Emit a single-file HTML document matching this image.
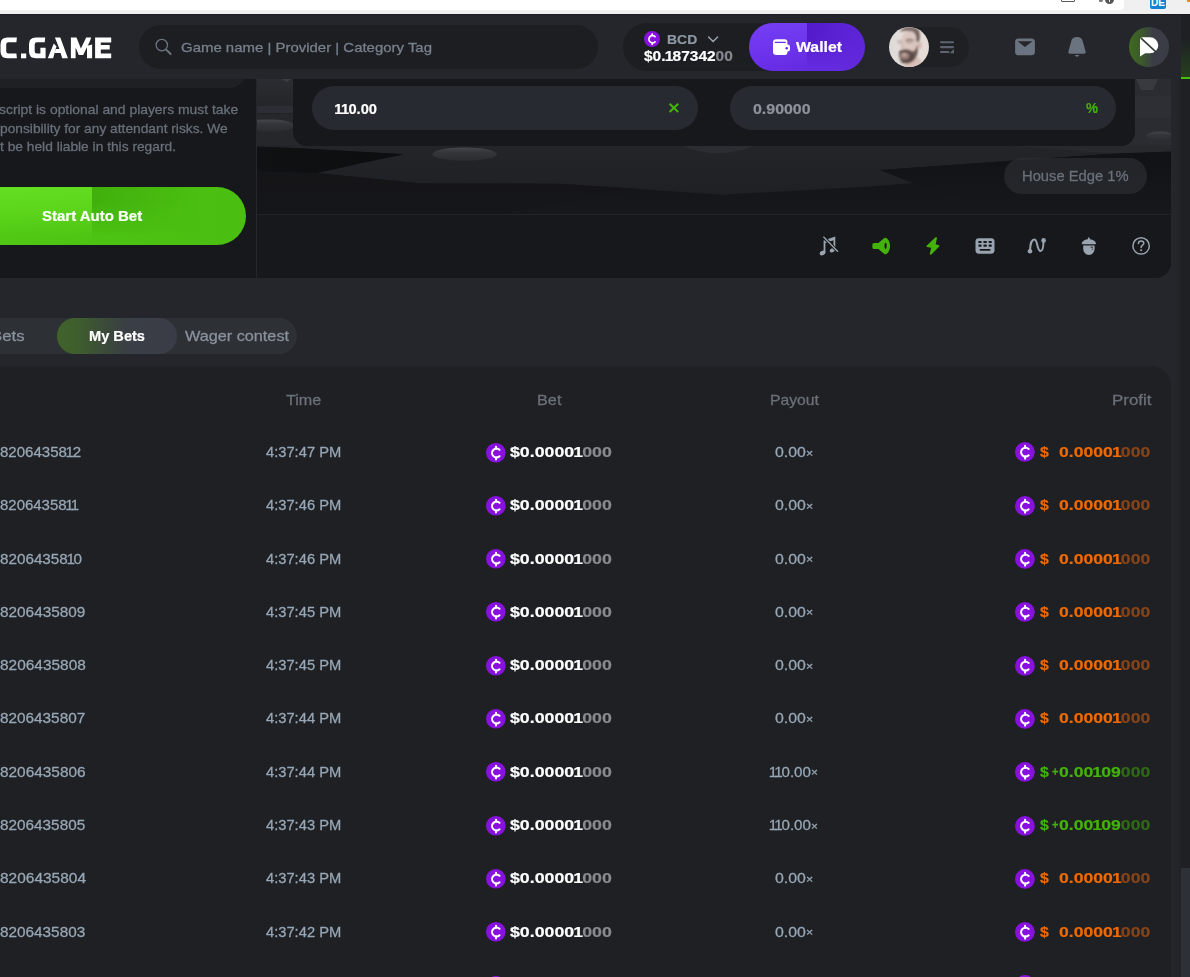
<!DOCTYPE html>
<html lang="en"><head><meta charset="utf-8"><title>BC.GAME</title>
<style>
*{margin:0;padding:0;box-sizing:border-box}
html,body{width:1190px;height:977px;overflow:hidden;background:#24262b}
body{position:relative;font-family:"Liberation Sans",sans-serif;font-size:15px;color:#98a7b5}
.a{position:absolute}
.t{-webkit-text-stroke:.28px;position:absolute;white-space:nowrap;line-height:20px;height:20px;transform-origin:0 50%;display:block}
svg{position:absolute;overflow:visible}
/* browser chrome strip */
#chrome{left:0;top:0;width:1190px;height:15px;background:#f0f0f0;border-bottom:1px solid #1b1c20}
#url{left:0;top:0;width:1124px;height:10px;background:#fff;border-radius:0 0 4px 0}
#urlrest{left:0;top:0;width:1100px;height:10px;background:#fff}
#de{left:1150px;top:0;width:16px;height:9px;background:#1283d4;border-radius:0 0 2px 2px;color:#fff;font-weight:700;font-size:10px;line-height:5px;text-align:center;overflow:hidden}
/* header */
#hdr{left:0;top:15px;width:1181px;height:64px;background:#24262b}
#search{left:139px;top:25px;width:459px;height:44px;border-radius:22px;background:#1c1e22}
#cur{left:623px;top:23px;width:200px;height:48px;border-radius:24px;background:#1c1e22}
#wallet{left:749px;top:23px;width:116px;height:48px;border-radius:24px;background:linear-gradient(90deg,#6a2fe9 0,#652be1 50%,#6129db 100%);overflow:hidden}
#wl1{left:0;top:0;width:58px;height:48px;background:linear-gradient(180deg,rgba(125,75,255,.55) 0,rgba(125,75,255,.3) 45%,rgba(125,75,255,0) 90%)}
#wl2{left:58px;top:0;width:58px;height:48px;background:linear-gradient(90deg,rgba(70,15,185,.6) 0,rgba(70,15,185,.25) 60%,rgba(70,15,185,.1) 100%);-webkit-mask-image:linear-gradient(180deg,#000 0,#000 30%,transparent 90%);mask-image:linear-gradient(180deg,#000 0,#000 30%,transparent 90%)}
#avpill{left:889px;top:27px;width:80px;height:40px;border-radius:20px;background:#1e2024}
#avatar{left:889px;top:27px;width:40px;height:40px;border-radius:50%;overflow:hidden;background:#d9cfcb}
#chat{left:1129px;top:27px;width:40px;height:40px;border-radius:50%;background:linear-gradient(90deg,#3f6b1f 0,#3c5a2a 30%,#3a3d45 60%,#3a3d47 100%)}
/* right strip */
#rstrip{left:1181px;top:15px;width:9px;height:962px;background:#1e2024}
#rgreen{left:1181px;top:38px;width:9px;height:39px;background:linear-gradient(180deg,rgba(67,179,9,0) 0,rgba(67,179,9,.22) 100%)}
#rline{left:1181px;top:77px;width:9px;height:2px;background:#43c10c}
#thumb{left:1181px;top:868px;width:9px;height:109px;background:#2d3036}
/* left panel */
#lpanel{left:0;top:79px;width:256px;height:199px;background:#17181b;overflow:hidden}
#lprev{left:-20px;top:60px;width:266px;height:28px;border-radius:0 0 16px 16px;background:#1e2024}
#startbtn{left:-40px;top:187px;width:286px;height:58px;border-radius:29px;background:linear-gradient(90deg,#50c914 0,#4cc212 50%,#4bbf11 100%);overflow:hidden}
#sb1{left:0;top:0;width:132px;height:58px;background:linear-gradient(180deg,rgba(120,245,45,.5) 0,rgba(120,245,45,.34) 40%,rgba(120,245,45,.04) 85%,rgba(120,245,45,0) 100%)}
#sb2{left:132px;top:0;width:110px;height:58px;background:linear-gradient(90deg,rgba(50,150,5,.42) 0,rgba(50,150,5,0) 100%);-webkit-mask-image:linear-gradient(180deg,#000 0,#000 25%,transparent 82%);mask-image:linear-gradient(180deg,#000 0,#000 25%,transparent 82%)}
/* game area */
#game{left:257px;top:79px;width:914px;height:199px;background:#17181b;border-radius:0 0 16px 0;overflow:hidden}
#scene{left:0;top:0;width:914px;height:135px;background:#1b1c1f;overflow:hidden}
#tbar{left:0;top:135px;width:914px;height:64px;background:#17181b;border-top:1px solid #212327}
#cpanel{left:36.4px;top:-10px;width:841.4px;height:76.6px;border-radius:0 0 14px 14px;background:#17181b}
.inp{top:7px;height:44px;border-radius:22px;background:#282a32}
#he{left:747px;top:79px;width:143px;height:36px;border-radius:18px;background:rgba(45,48,53,.62)}
/* tabs */
#tabs{left:-40px;top:318px;width:337px;height:36px;border-radius:18px;background:#2d3035}
#tabact{left:57px;top:318px;width:120px;height:36px;border-radius:18px;background:linear-gradient(90deg,#40632a 0,#3f5f2d 16%,#3b4b39 40%,#3a3e45 58%,#3a3d47 100%)}
/* table */
#table{left:-30px;top:366px;width:1201px;height:640px;border-radius:0 20px 0 0;background:#1e2024}
.t i{font-style:normal;margin:0 -.09em}
.t .x{font-weight:400;font-size:.78em;position:relative;top:-.04em}
.t.b{font-weight:700;-webkit-text-stroke:.2px}
.t.b i{margin:0 -.05em}
#rshadow{left:1174px;top:79px;width:7px;height:898px;background:linear-gradient(90deg,rgba(0,0,0,0),rgba(0,0,0,.1))}

</style></head>
<body>
<div class="a" id="chrome"></div><div class="a" id="url"></div>
<div class="a" style="left:1061px;top:-8px;width:14px;height:10px;border:1.4px solid #5a5a5a;border-radius:1px"></div>
<div class="a" style="left:1104.5px;top:-6px;width:9.6px;height:9.6px;border-radius:50%;background:#555"></div>
<div class="a" style="left:1108.6px;top:-3px;width:1.4px;height:5px;background:#eee"></div>
<div class="a" style="left:1099px;top:-1px;width:4px;height:3px;border-radius:0 0 2px 1px;background:#777"></div>
<div class="a" id="de">DE</div>
<div class="a" style="left:1187px;top:0;width:3px;height:2px;background:#f08a24"></div>
<div class="a" id="hdr"></div>
<svg class="a" style="left:0;top:30px" width="120" height="36" viewBox="0 30 120 36" role="img" aria-label="BC.GAME"><g fill="#fff"><path d="M16.9 37.5H7.4Q0.5 37.5 0.5 44.2V51.6Q0.5 58.3 7.4 58.3H16.9L16.4 53.6H8.6Q6.2 53.6 6.2 51.2V44.6Q6.2 42.2 8.6 42.2H16.4Z"/><rect x="21" y="53.5" width="5.2" height="4.8"/><path d="M45.2 37.5H35.8Q29 37.5 29 44.2V51.6Q29 58.3 35.8 58.3H45.6V47.8H40.4V53.6H37Q34.7 53.6 34.7 51.2V44.6Q34.7 42.2 37 42.2H44.7Z"/><path d="M54.9 37.6H60.3L67.9 58.3H62.2L60.6 53H54.6L55.6 49H59.4L58 45.2Z"/><path d="M47.8 58.3L53.8 43.6L56.6 46.6L55.6 49L54.6 53L53.1 58.3Z"/><path d="M70.9 37.6H76.5L80.9 48.4L86.2 37.6H91.2L90 41L83.2 55H78.8L75.6 47.4V58.3H70.9Z"/><path d="M87 45.8L92.1 44.4V58.3H87Z"/><path d="M95.1 37.6H111.2V42.5H100.8V45.1H109.7V49.6H100.8V53.5H111.2V58.3H95.1Z"/></g></svg>
<div class="a" id="search"></div>
<svg class="a" style="left:154px;top:37px" width="20" height="20" viewBox="0 0 20 20"><circle cx="7.8" cy="8.1" r="5.7" fill="none" stroke="#6e7682" stroke-width="1.3"/><path d="M12.2 12.6L16.6 17" stroke="#6e7682" stroke-width="1.9" stroke-linecap="round"/></svg>
<span class="t" style="left:181.00px;top:37.76px;font-size:13.3px;color:#77808c;transform:scaleX(1.1245);">Game name | Provider | Category Tag</span>
<div class="a" id="cur"></div>
<svg class="a" style="left:644.00px;top:31.00px" width="16" height="16" viewBox="0 0 20 20"><circle cx="10" cy="10" r="10" fill="#8911e0"/><path d="M13.8 7A4.5 4.5 0 1 0 13.8 13.5" fill="none" stroke="#fff" stroke-width="2.1" stroke-linecap="round"/><path d="M10.2 3.7V6M10.2 14.5V16.8" stroke="#fff" stroke-width="2" stroke-linecap="round"/></svg>
<span class="t b" style="left:666.80px;top:29.96px;font-size:13.6px;color:#8e98a5;transform:scaleX(1.0254);">BCD</span>
<svg class="a" style="left:707px;top:35px" width="12" height="9" viewBox="0 0 12 9"><path d="M1.6 2L6.1 6.6L10.6 2" fill="none" stroke="#98a2ae" stroke-width="1.5" stroke-linecap="round" stroke-linejoin="round"/></svg>
<span class="t b" style="left:644.00px;top:46.47px;font-size:14.5px;color:#fff;transform:scaleX(1.0663);">$0.<i>1</i>87342<span style="color:#85888e">00</span></span>
<div class="a" id="wallet"><div class="a" id="wl1"></div><div class="a" id="wl2"></div></div>
<svg class="a" style="left:772px;top:38px" width="20" height="18" viewBox="0 0 20 18"><path d="M1 4.6A3.3 3.3 0 0 1 4.3 1.3H12.6A2.8 2.8 0 0 1 15.4 4.1V6.6H15.8A2.2 2.2 0 0 1 18 8.8V11.6A2.2 2.2 0 0 1 15.8 13.6H15.4V14.2A2.8 2.8 0 0 1 12.6 17H4.3A3.3 3.3 0 0 1 1 13.7Z" fill="#fff"/><path d="M3.4 4.4H13.2" stroke="#6a30ea" stroke-width="1.3" stroke-linecap="round"/><circle cx="14.7" cy="10.3" r="1.25" fill="#652be1"/></svg>
<span class="t b" style="left:795.60px;top:37.38px;font-size:15px;color:#fff;transform:scaleX(1.0544);">Wallet</span>
<div class="a" id="avpill"></div>
<svg class="a" style="left:889px;top:27px" width="40" height="40" viewBox="0 0 40 40"><defs><clipPath id="avc"><circle cx="20" cy="20.1" r="20"/></clipPath><filter id="b1" x="-30%" y="-30%" width="160%" height="160%"><feGaussianBlur stdDeviation="1.3"/></filter><filter id="b2" x="-30%" y="-30%" width="160%" height="160%"><feGaussianBlur stdDeviation="0.8"/></filter><linearGradient id="avbg" x1="0" y1="0" x2="1" y2="0"><stop offset="0" stop-color="#dedad7"/><stop offset=".5" stop-color="#e6e1de"/><stop offset="1" stop-color="#e6dad6"/></linearGradient></defs><g clip-path="url(#avc)"><rect width="40" height="40" fill="url(#avbg)"/><g filter="url(#b1)"><ellipse cx="20.5" cy="17" rx="9.2" ry="13" fill="#dbc7c0"/><path d="M18 33L30 30L36 42H14Z" fill="#d9c0b8"/><ellipse cx="31" cy="18.5" rx="1.8" ry="3.4" fill="#d4b9b1"/><path d="M11 4.5C14 -1 26 -2 30 3.5C31.5 7 31 11 30 14.5L27.6 14C27.8 9 26 5.5 23 4.5C19 3.4 14 4 11 4.5Z" fill="#7d6c68"/><path d="M25 3C29 4 31.4 8 30 15L27.4 14.4C27.8 9 26.6 5.6 25 3Z" fill="#6f5f5b"/><path d="M10.2 24.6C13.5 22 19 22.4 23.4 24.4C26.4 23.6 27.6 20.5 28.2 17.5C29.6 22 29 29 25.4 33C22 36.8 15.6 37.6 12.4 35.4C10.4 32 9.6 27.6 10.2 24.6Z" fill="#6c5955"/><path d="M22 26C25 27 25.6 31 23 33.6C20.6 35.8 16 36.4 13.2 34.6C16 34.6 20 33.6 21.6 31Z" fill="#54423f"/><path d="M10.6 24.8C14 22.6 19 23 23.2 25" stroke="#57443f" stroke-width="1.6" fill="none"/><ellipse cx="15.6" cy="29" rx="4" ry="2.8" fill="#a48b85"/></g><g filter="url(#b2)"><ellipse cx="15.2" cy="27.4" rx="2.6" ry="1.1" fill="#cbaaa2"/><path d="M17 13.6C19 12.6 22.6 12.6 24.4 13.6" stroke="#6f5c58" stroke-width="1.2" fill="none"/><path d="M17.6 15.4H23.6" stroke="#9d8882" stroke-width="1"/><path d="M8 15C9.6 14 11.6 14 13 15" stroke="#b09c97" stroke-width="1.1" fill="none"/><path d="M9 16.6H12.6" stroke="#c0aca7" stroke-width=".9"/><path d="M14.4 16L13.4 22.4" stroke="#cdb6af" stroke-width="1.4"/></g></g></svg>
<svg class="a" style="left:939px;top:40px" width="16" height="14" viewBox="0 0 16 14"><path d="M2 2.2H14M2 7.1H14M2 12H9.5" stroke="#5d6470" stroke-width="2.1" stroke-linecap="round"/><path d="M10.6 13.2L15 8.9V13.2Z" fill="#5d6470"/></svg>
<svg class="a" style="left:1015px;top:38px" width="20" height="18" viewBox="0 0 20 18"><rect x="0.1" y="0.4" width="19.8" height="16.9" rx="3.6" fill="#6b7380"/><path d="M2.6 3.2H17.4L10 8.9Z" fill="#24262b"/></svg>
<svg class="a" style="left:0;top:0" width="1190" height="100" viewBox="0 0 1190 100"><path d="M1077 37C1073.6 37 1071.6 38.7 1071.2 41.5L1068.6 50.7C1068 52.6 1068.6 53.7 1070 53.7H1084C1085.4 53.7 1086 52.6 1085.4 50.7L1082.8 41.5C1082.4 38.7 1080.4 37 1077 37Z" fill="#6b7380"/><path d="M1074.3 54.9H1079.7L1077 57.1Z" fill="#6b7380"/></svg>
<div class="a" id="chat"></div>
<svg class="a" style="left:1129px;top:27px" width="40" height="40" viewBox="0 0 40 40"><path d="M11 29.6V13.4Q11 10.3 14 10.3H21A8.3 8 0 0 1 21 26.3H16.2Z" fill="#fff"/><path d="M12 11.2L27.4 25.4" stroke="#333b36" stroke-width="1.6"/></svg>
<div class="a" id="rshadow"></div><div class="a" id="rstrip"></div><div class="a" id="rgreen"></div><div class="a" id="rline"></div><div class="a" id="thumb"></div>
<div class="a" id="lpanel"><div class="a" id="lprev" style="top:-19px"></div></div>
<div class="a" style="left:256px;top:79px;width:1px;height:199px;background:#24262b"></div>
<span class="t" style="left:-0.80px;top:99.76px;font-size:13.3px;color:#69707a;transform:scaleX(1.0440);">script is optional and players must take</span>
<span class="t" style="left:0.00px;top:118.66px;font-size:13.3px;color:#69707a;transform:scaleX(1.0345);">ponsibility for any attendant risks. We</span>
<span class="t" style="left:0.00px;top:137.46px;font-size:13.3px;color:#69707a;transform:scaleX(1.0352);">t be held liable in this regard.</span>
<div class="a" id="startbtn"><div class="a" id="sb1"></div><div class="a" id="sb2"></div></div>
<span class="t b" style="left:41.50px;top:206.38px;font-size:14.6px;color:#fff;transform:scaleX(1.0270);">Start Auto Bet</span>
<div class="a" id="game">
<div class="a" id="scene"><svg class="a" style="left:0;top:0" width="914" height="135" viewBox="257 79 914 135"><defs><linearGradient id="eg" x1="0" y1="0" x2="0" y2="1"><stop offset="0" stop-color="#45474c"/><stop offset=".35" stop-color="#34363b"/><stop offset="1" stop-color="#2a2c30"/></linearGradient><linearGradient id="sky" x1="0" y1="0" x2="0" y2="1"><stop offset="0" stop-color="#2b2d32"/><stop offset="1" stop-color="#232529"/></linearGradient><linearGradient id="band" x1="0" y1="0" x2="0" y2="1"><stop offset="0" stop-color="#232529"/><stop offset="1" stop-color="#1e2023"/></linearGradient><linearGradient id="low" x1="0" y1="0" x2="0" y2="1"><stop offset="0" stop-color="#0e0f11"/><stop offset=".45" stop-color="#111214"/><stop offset="1" stop-color="#17181b"/></linearGradient><linearGradient id="wedge" x1="0" y1="0" x2="1" y2="0"><stop offset="0" stop-color="#101113"/><stop offset="1" stop-color="#0c0d0f"/></linearGradient><linearGradient id="rdark" x1="0" y1="0" x2="0" y2="1"><stop offset="0" stop-color="#111215"/><stop offset="1" stop-color="#17181b"/></linearGradient></defs><rect x="257" y="79" width="914" height="135" fill="url(#low)"/><rect x="257" y="79" width="60" height="28" fill="url(#sky)"/><rect x="257" y="106" width="60" height="7.4" fill="#2c2e35"/><rect x="257" y="113.4" width="60" height="34" fill="#25272b"/><ellipse cx="268" cy="125.6" rx="27" ry="6.2" fill="url(#eg)"/><path d="M282 79H291L287 82Z" fill="#3c3e43"/><rect x="1110" y="79" width="61" height="70" fill="#2a2c31"/><path d="M1136 79H1158L1153 90H1141Z" fill="#383a40"/><rect x="1110" y="96" width="61" height="22" fill="#2d2f34"/><ellipse cx="1160" cy="136" rx="14" ry="4.6" fill="url(#eg)"/><path d="M257 145H1171V152L1111 153.8L880 170L913 183L870 186.4L721 194.7L640 189L560 183.8L420 183.3L317 173.1L404 154.2L300 148.3L257 146.6Z" fill="url(#band)"/><path d="M1000 145H1171V151.4L1111 153.6Z" fill="#27292d"/><path d="M257 146.6L300 148.3L404 154.2L360 163L317 173.1L257 171Z" fill="url(#wedge)"/><path d="M257 171L317 173.1L420 183.3L560 183.8L640 189L500 214H257Z" fill="#15161a" opacity=".55"/><path d="M880 170L1111 153.8L1171 151.6V214H1000L913 183Z" fill="url(#rdark)"/><ellipse cx="464.6" cy="154.2" rx="32.2" ry="6.6" fill="url(#eg)"/><path d="M682 145.5H755C745 151 725 153.4 716 153.2C705 153 690 150 682 145.5Z" fill="#2b2d32"/></svg></div>
<div class="a" id="cpanel"></div>
<div class="a inp" style="left:55px;width:386px"></div><div class="a inp" style="left:473px;width:386px"></div>
<svg class="a" style="left:410px;top:23px" width="14" height="12" viewBox="0 0 14 12"><path d="M2.6 1.8L11.2 10M11.2 1.8L2.6 10" stroke="#43b309" stroke-width="2.1"/></svg>
<div class="a" id="he"></div>
<div class="a" id="tbar"></div>
</div>
<span class="t b" style="left:334.70px;top:98.57px;font-size:14.2px;color:#fff;transform:scaleX(1.0346);"><i>1</i><i>1</i>0.00</span>
<span class="t b" style="left:752.80px;top:98.57px;font-size:14.2px;color:#8f939a;transform:scaleX(1.1229);">0.90000</span>
<span class="t b" style="left:1086.00px;top:98.37px;font-size:14.5px;color:#43b309;transform:scaleX(0.9298);">%</span>
<span class="t" style="left:1022.40px;top:165.98px;font-size:15px;color:#6a707a;transform:scaleX(0.9833);">House Edge 1%</span>
<svg class="a" style="left:0;top:0" width="1190" height="977" viewBox="0 0 1190 977"><g fill="#99a4b0"><ellipse cx="822.6" cy="252.9" rx="3" ry="2.2" transform="rotate(-25 822.6 252.9)"/><ellipse cx="832.4" cy="250.2" rx="2.8" ry="2" transform="rotate(-25 832.4 250.2)"/><path d="M823.6 240.6L835.3 236.6V250.2H833.5V240.2L825.4 243V252.6H823.6Z"/></g><path d="M823.2 236.6L838.2 252" stroke="#17181b" stroke-width="3.2"/><path d="M823.4 236.8L838 251.8" stroke="#99a4b0" stroke-width="1.3"/><path d="M872.4 244.6Q872.4 243 874 243H878.4L884 238.2Q885.4 237.2 886.8 238.2C888.8 239.8 890 242.6 890 246C890 249.4 888.8 252.2 886.8 253.8Q885.4 254.8 884 253.8L878.4 249H874Q872.4 249 872.4 247.4Z" fill="#43b309"/><ellipse cx="885.6" cy="246" rx="1.1" ry="3.2" fill="#17181b"/><path d="M935.2 237.4Q936.4 236.4 937 237.8L935.7 244.2L939 245.2Q939.8 245.6 939.2 246.4L931.4 254.4Q930 255.2 929.8 253.8L931.2 247.8L927 246.9Q926 246.5 926.6 245.7Z" fill="#43b309"/><rect x="975.5" y="238.2" width="19" height="15.5" rx="3.4" fill="#99a4b0"/><g fill="#17181b"><rect x="978.4" y="241" width="3.2" height="2.1" rx=".6"/><rect x="983.4" y="241" width="3.4" height="2.1" rx=".6"/><rect x="988.6" y="241" width="3.2" height="2.1" rx=".6"/><rect x="978.4" y="244.6" width="3.2" height="2.1" rx=".6"/><rect x="983.4" y="244.6" width="3.4" height="2.1" rx=".6"/><rect x="988.6" y="244.6" width="3.2" height="2.1" rx=".6"/><rect x="979.6" y="249" width="11" height="1.8" rx=".7"/></g><path d="M1030 251C1030 244 1032 239.6 1034.6 239.6C1037.6 239.6 1037 251 1040.6 251C1043 251 1043.5 246 1043.5 240.6" fill="none" stroke="#99a4b0" stroke-width="2"/><circle cx="1030" cy="251.2" r="2.3" fill="#99a4b0"/><circle cx="1043.6" cy="240.4" r="2.3" fill="#99a4b0"/><path d="M1088 238Q1088.8 236.6 1089.6 238L1090 239.3C1093.4 239.6 1095.8 241.4 1096 243.6Q1096 244.2 1095.4 244.2H1082.3Q1081.7 244.2 1081.8 243.6C1082 241.4 1084.3 239.6 1087.7 239.3Z" fill="#99a4b0"/><path d="M1083.2 245.4H1094.6V248.4C1094.6 252 1092 254.9 1088.9 254.9C1085.8 254.9 1083.2 252 1083.2 248.4Z" fill="#99a4b0"/><path d="M1090.6 247.2H1093M1091.8 249.2H1093" stroke="#17181b" stroke-width=".9"/><circle cx="1141.1" cy="245.9" r="8.2" fill="none" stroke="#99a4b0" stroke-width="1.5"/><path d="M1138.4 243.6C1138.4 241.8 1139.6 240.9 1141.1 240.9C1142.7 240.9 1143.8 241.9 1143.8 243.2C1143.8 245.2 1141.1 245.2 1141.1 247.6" fill="none" stroke="#99a4b0" stroke-width="1.5" stroke-linecap="round"/><circle cx="1141.1" cy="250.3" r="1" fill="#99a4b0"/></svg>
<div class="a" id="tabs"></div><div class="a" id="tabact"></div>
<span class="t" style="left:-9.50px;top:326.18px;font-size:15px;color:#8a919c;transform:scaleX(1.1161);">Bets</span>
<span class="t b" style="left:89.00px;top:326.18px;font-size:15px;color:#fff;transform:scaleX(0.9734);">My Bets</span>
<span class="t" style="left:185.00px;top:326.18px;font-size:15px;color:#8a919c;transform:scaleX(1.0816);">Wager contest</span>
<div class="a" id="table"></div>
<span class="t" style="left:285.70px;top:389.78px;font-size:15px;color:#6b7078;transform:scaleX(1.0768);">Time</span>
<span class="t" style="left:536.90px;top:389.78px;font-size:15px;color:#6b7078;transform:scaleX(1.0837);">Bet</span>
<span class="t" style="left:770.00px;top:389.78px;font-size:15px;color:#6b7078;transform:scaleX(1.0492);">Payout</span>
<span class="t" style="left:1111.60px;top:389.78px;font-size:15px;color:#6b7078;transform:scaleX(1.1281);">Profit</span>
<span class="t" style="left:-0.40px;top:441.98px;font-size:15px;color:#98a7b5;transform:scaleX(1.0031);">82064358<i>1</i>2</span>
<span class="t" style="left:265.70px;top:441.98px;font-size:15px;color:#98a7b5;transform:scaleX(0.9802);">4:37:47 PM</span>
<svg class="a" style="left:485.75px;top:442.50px" width="19.6" height="19.6" viewBox="0 0 20 20"><circle cx="10" cy="10" r="10" fill="#8911e0"/><path d="M13.8 7A4.5 4.5 0 1 0 13.8 13.5" fill="none" stroke="#fff" stroke-width="2.1" stroke-linecap="round"/><path d="M10.2 3.7V6M10.2 14.5V16.8" stroke="#fff" stroke-width="2" stroke-linecap="round"/></svg>
<span class="t b" style="left:510.00px;top:441.98px;font-size:15px;color:#fff;transform:scaleX(1.1822);">$0.0000<i>1</i><span style="color:#888a8f">000</span></span>
<span class="t" style="left:775.10px;top:441.98px;font-size:15px;color:#98a7b5;transform:scaleX(1.0574);">0.00<b class="x">×</b></span>
<svg class="a" style="left:1015.00px;top:442.40px" width="19.8" height="19.8" viewBox="0 0 20 20"><circle cx="10" cy="10" r="10" fill="#8911e0"/><path d="M13.8 7A4.5 4.5 0 1 0 13.8 13.5" fill="none" stroke="#fff" stroke-width="2.1" stroke-linecap="round"/><path d="M10.2 3.7V6M10.2 14.5V16.8" stroke="#fff" stroke-width="2" stroke-linecap="round"/></svg>
<span class="t b" style="left:1039.70px;top:441.98px;font-size:15px;color:#ee6a00;transform:scaleX(1.0547);">$</span>
<span class="t b" style="left:1059.20px;top:441.98px;font-size:15px;color:#ee6a00;transform:scaleX(1.1728);">0.0000<i>1</i><span style="color:#86441a">000</span></span>
<span class="t" style="left:-0.40px;top:495.28px;font-size:15px;color:#98a7b5;transform:scaleX(0.9966);">82064358<i>1</i><i>1</i></span>
<span class="t" style="left:265.70px;top:495.28px;font-size:15px;color:#98a7b5;transform:scaleX(0.9802);">4:37:46 PM</span>
<svg class="a" style="left:485.75px;top:495.80px" width="19.6" height="19.6" viewBox="0 0 20 20"><circle cx="10" cy="10" r="10" fill="#8911e0"/><path d="M13.8 7A4.5 4.5 0 1 0 13.8 13.5" fill="none" stroke="#fff" stroke-width="2.1" stroke-linecap="round"/><path d="M10.2 3.7V6M10.2 14.5V16.8" stroke="#fff" stroke-width="2" stroke-linecap="round"/></svg>
<span class="t b" style="left:510.00px;top:495.28px;font-size:15px;color:#fff;transform:scaleX(1.1822);">$0.0000<i>1</i><span style="color:#888a8f">000</span></span>
<span class="t" style="left:775.10px;top:495.28px;font-size:15px;color:#98a7b5;transform:scaleX(1.0574);">0.00<b class="x">×</b></span>
<svg class="a" style="left:1015.00px;top:495.70px" width="19.8" height="19.8" viewBox="0 0 20 20"><circle cx="10" cy="10" r="10" fill="#8911e0"/><path d="M13.8 7A4.5 4.5 0 1 0 13.8 13.5" fill="none" stroke="#fff" stroke-width="2.1" stroke-linecap="round"/><path d="M10.2 3.7V6M10.2 14.5V16.8" stroke="#fff" stroke-width="2" stroke-linecap="round"/></svg>
<span class="t b" style="left:1039.70px;top:495.28px;font-size:15px;color:#ee6a00;transform:scaleX(1.0547);">$</span>
<span class="t b" style="left:1059.20px;top:495.28px;font-size:15px;color:#ee6a00;transform:scaleX(1.1728);">0.0000<i>1</i><span style="color:#86441a">000</span></span>
<span class="t" style="left:-0.40px;top:548.58px;font-size:15px;color:#98a7b5;transform:scaleX(1.0155);">82064358<i>1</i>0</span>
<span class="t" style="left:265.70px;top:548.58px;font-size:15px;color:#98a7b5;transform:scaleX(0.9802);">4:37:46 PM</span>
<svg class="a" style="left:485.75px;top:549.10px" width="19.6" height="19.6" viewBox="0 0 20 20"><circle cx="10" cy="10" r="10" fill="#8911e0"/><path d="M13.8 7A4.5 4.5 0 1 0 13.8 13.5" fill="none" stroke="#fff" stroke-width="2.1" stroke-linecap="round"/><path d="M10.2 3.7V6M10.2 14.5V16.8" stroke="#fff" stroke-width="2" stroke-linecap="round"/></svg>
<span class="t b" style="left:510.00px;top:548.58px;font-size:15px;color:#fff;transform:scaleX(1.1822);">$0.0000<i>1</i><span style="color:#888a8f">000</span></span>
<span class="t" style="left:775.10px;top:548.58px;font-size:15px;color:#98a7b5;transform:scaleX(1.0574);">0.00<b class="x">×</b></span>
<svg class="a" style="left:1015.00px;top:549.00px" width="19.8" height="19.8" viewBox="0 0 20 20"><circle cx="10" cy="10" r="10" fill="#8911e0"/><path d="M13.8 7A4.5 4.5 0 1 0 13.8 13.5" fill="none" stroke="#fff" stroke-width="2.1" stroke-linecap="round"/><path d="M10.2 3.7V6M10.2 14.5V16.8" stroke="#fff" stroke-width="2" stroke-linecap="round"/></svg>
<span class="t b" style="left:1039.70px;top:548.58px;font-size:15px;color:#ee6a00;transform:scaleX(1.0547);">$</span>
<span class="t b" style="left:1059.20px;top:548.58px;font-size:15px;color:#ee6a00;transform:scaleX(1.1728);">0.0000<i>1</i><span style="color:#86441a">000</span></span>
<span class="t" style="left:-0.40px;top:601.88px;font-size:15px;color:#98a7b5;transform:scaleX(1.0235);">8206435809</span>
<span class="t" style="left:265.70px;top:601.88px;font-size:15px;color:#98a7b5;transform:scaleX(0.9802);">4:37:45 PM</span>
<svg class="a" style="left:485.75px;top:602.40px" width="19.6" height="19.6" viewBox="0 0 20 20"><circle cx="10" cy="10" r="10" fill="#8911e0"/><path d="M13.8 7A4.5 4.5 0 1 0 13.8 13.5" fill="none" stroke="#fff" stroke-width="2.1" stroke-linecap="round"/><path d="M10.2 3.7V6M10.2 14.5V16.8" stroke="#fff" stroke-width="2" stroke-linecap="round"/></svg>
<span class="t b" style="left:510.00px;top:601.88px;font-size:15px;color:#fff;transform:scaleX(1.1822);">$0.0000<i>1</i><span style="color:#888a8f">000</span></span>
<span class="t" style="left:775.10px;top:601.88px;font-size:15px;color:#98a7b5;transform:scaleX(1.0574);">0.00<b class="x">×</b></span>
<svg class="a" style="left:1015.00px;top:602.30px" width="19.8" height="19.8" viewBox="0 0 20 20"><circle cx="10" cy="10" r="10" fill="#8911e0"/><path d="M13.8 7A4.5 4.5 0 1 0 13.8 13.5" fill="none" stroke="#fff" stroke-width="2.1" stroke-linecap="round"/><path d="M10.2 3.7V6M10.2 14.5V16.8" stroke="#fff" stroke-width="2" stroke-linecap="round"/></svg>
<span class="t b" style="left:1039.70px;top:601.88px;font-size:15px;color:#ee6a00;transform:scaleX(1.0547);">$</span>
<span class="t b" style="left:1059.20px;top:601.88px;font-size:15px;color:#ee6a00;transform:scaleX(1.1728);">0.0000<i>1</i><span style="color:#86441a">000</span></span>
<span class="t" style="left:-0.40px;top:655.18px;font-size:15px;color:#98a7b5;transform:scaleX(1.0283);">8206435808</span>
<span class="t" style="left:265.70px;top:655.18px;font-size:15px;color:#98a7b5;transform:scaleX(0.9802);">4:37:45 PM</span>
<svg class="a" style="left:485.75px;top:655.70px" width="19.6" height="19.6" viewBox="0 0 20 20"><circle cx="10" cy="10" r="10" fill="#8911e0"/><path d="M13.8 7A4.5 4.5 0 1 0 13.8 13.5" fill="none" stroke="#fff" stroke-width="2.1" stroke-linecap="round"/><path d="M10.2 3.7V6M10.2 14.5V16.8" stroke="#fff" stroke-width="2" stroke-linecap="round"/></svg>
<span class="t b" style="left:510.00px;top:655.18px;font-size:15px;color:#fff;transform:scaleX(1.1822);">$0.0000<i>1</i><span style="color:#888a8f">000</span></span>
<span class="t" style="left:775.10px;top:655.18px;font-size:15px;color:#98a7b5;transform:scaleX(1.0574);">0.00<b class="x">×</b></span>
<svg class="a" style="left:1015.00px;top:655.60px" width="19.8" height="19.8" viewBox="0 0 20 20"><circle cx="10" cy="10" r="10" fill="#8911e0"/><path d="M13.8 7A4.5 4.5 0 1 0 13.8 13.5" fill="none" stroke="#fff" stroke-width="2.1" stroke-linecap="round"/><path d="M10.2 3.7V6M10.2 14.5V16.8" stroke="#fff" stroke-width="2" stroke-linecap="round"/></svg>
<span class="t b" style="left:1039.70px;top:655.18px;font-size:15px;color:#ee6a00;transform:scaleX(1.0547);">$</span>
<span class="t b" style="left:1059.20px;top:655.18px;font-size:15px;color:#ee6a00;transform:scaleX(1.1728);">0.0000<i>1</i><span style="color:#86441a">000</span></span>
<span class="t" style="left:-0.40px;top:708.48px;font-size:15px;color:#98a7b5;transform:scaleX(1.0211);">8206435807</span>
<span class="t" style="left:265.70px;top:708.48px;font-size:15px;color:#98a7b5;transform:scaleX(0.9802);">4:37:44 PM</span>
<svg class="a" style="left:485.75px;top:709.00px" width="19.6" height="19.6" viewBox="0 0 20 20"><circle cx="10" cy="10" r="10" fill="#8911e0"/><path d="M13.8 7A4.5 4.5 0 1 0 13.8 13.5" fill="none" stroke="#fff" stroke-width="2.1" stroke-linecap="round"/><path d="M10.2 3.7V6M10.2 14.5V16.8" stroke="#fff" stroke-width="2" stroke-linecap="round"/></svg>
<span class="t b" style="left:510.00px;top:708.48px;font-size:15px;color:#fff;transform:scaleX(1.1822);">$0.0000<i>1</i><span style="color:#888a8f">000</span></span>
<span class="t" style="left:775.10px;top:708.48px;font-size:15px;color:#98a7b5;transform:scaleX(1.0574);">0.00<b class="x">×</b></span>
<svg class="a" style="left:1015.00px;top:708.90px" width="19.8" height="19.8" viewBox="0 0 20 20"><circle cx="10" cy="10" r="10" fill="#8911e0"/><path d="M13.8 7A4.5 4.5 0 1 0 13.8 13.5" fill="none" stroke="#fff" stroke-width="2.1" stroke-linecap="round"/><path d="M10.2 3.7V6M10.2 14.5V16.8" stroke="#fff" stroke-width="2" stroke-linecap="round"/></svg>
<span class="t b" style="left:1039.70px;top:708.48px;font-size:15px;color:#ee6a00;transform:scaleX(1.0547);">$</span>
<span class="t b" style="left:1059.20px;top:708.48px;font-size:15px;color:#ee6a00;transform:scaleX(1.1728);">0.0000<i>1</i><span style="color:#86441a">000</span></span>
<span class="t" style="left:-0.40px;top:761.78px;font-size:15px;color:#98a7b5;transform:scaleX(1.0259);">8206435806</span>
<span class="t" style="left:265.70px;top:761.78px;font-size:15px;color:#98a7b5;transform:scaleX(0.9802);">4:37:44 PM</span>
<svg class="a" style="left:485.75px;top:762.30px" width="19.6" height="19.6" viewBox="0 0 20 20"><circle cx="10" cy="10" r="10" fill="#8911e0"/><path d="M13.8 7A4.5 4.5 0 1 0 13.8 13.5" fill="none" stroke="#fff" stroke-width="2.1" stroke-linecap="round"/><path d="M10.2 3.7V6M10.2 14.5V16.8" stroke="#fff" stroke-width="2" stroke-linecap="round"/></svg>
<span class="t b" style="left:510.00px;top:761.78px;font-size:15px;color:#fff;transform:scaleX(1.1822);">$0.0000<i>1</i><span style="color:#888a8f">000</span></span>
<span class="t" style="left:770.20px;top:761.78px;font-size:15px;color:#98a7b5;transform:scaleX(1.0117);"><i>1</i><i>1</i>0.00<b class="x">×</b></span>
<svg class="a" style="left:1015.00px;top:762.20px" width="19.8" height="19.8" viewBox="0 0 20 20"><circle cx="10" cy="10" r="10" fill="#8911e0"/><path d="M13.8 7A4.5 4.5 0 1 0 13.8 13.5" fill="none" stroke="#fff" stroke-width="2.1" stroke-linecap="round"/><path d="M10.2 3.7V6M10.2 14.5V16.8" stroke="#fff" stroke-width="2" stroke-linecap="round"/></svg>
<span class="t b" style="left:1039.70px;top:761.78px;font-size:15px;color:#43b309;transform:scaleX(1.0547);">$</span>
<span class="t b" style="left:1051.60px;top:762.16px;font-size:13px;color:#43b309;transform:scaleX(0.8428);">+</span>
<span class="t b" style="left:1059.20px;top:761.78px;font-size:15px;color:#43b309;transform:scaleX(1.1728);">0.00<i>1</i>09<span style="color:#2f6a16">000</span></span>
<span class="t" style="left:-0.40px;top:815.08px;font-size:15px;color:#98a7b5;transform:scaleX(1.0211);">8206435805</span>
<span class="t" style="left:265.70px;top:815.08px;font-size:15px;color:#98a7b5;transform:scaleX(0.9802);">4:37:43 PM</span>
<svg class="a" style="left:485.75px;top:815.60px" width="19.6" height="19.6" viewBox="0 0 20 20"><circle cx="10" cy="10" r="10" fill="#8911e0"/><path d="M13.8 7A4.5 4.5 0 1 0 13.8 13.5" fill="none" stroke="#fff" stroke-width="2.1" stroke-linecap="round"/><path d="M10.2 3.7V6M10.2 14.5V16.8" stroke="#fff" stroke-width="2" stroke-linecap="round"/></svg>
<span class="t b" style="left:510.00px;top:815.08px;font-size:15px;color:#fff;transform:scaleX(1.1822);">$0.0000<i>1</i><span style="color:#888a8f">000</span></span>
<span class="t" style="left:770.20px;top:815.08px;font-size:15px;color:#98a7b5;transform:scaleX(1.0117);"><i>1</i><i>1</i>0.00<b class="x">×</b></span>
<svg class="a" style="left:1015.00px;top:815.50px" width="19.8" height="19.8" viewBox="0 0 20 20"><circle cx="10" cy="10" r="10" fill="#8911e0"/><path d="M13.8 7A4.5 4.5 0 1 0 13.8 13.5" fill="none" stroke="#fff" stroke-width="2.1" stroke-linecap="round"/><path d="M10.2 3.7V6M10.2 14.5V16.8" stroke="#fff" stroke-width="2" stroke-linecap="round"/></svg>
<span class="t b" style="left:1039.70px;top:815.08px;font-size:15px;color:#43b309;transform:scaleX(1.0547);">$</span>
<span class="t b" style="left:1051.60px;top:815.46px;font-size:13px;color:#43b309;transform:scaleX(0.8428);">+</span>
<span class="t b" style="left:1059.20px;top:815.08px;font-size:15px;color:#43b309;transform:scaleX(1.1728);">0.00<i>1</i>09<span style="color:#2f6a16">000</span></span>
<span class="t" style="left:-0.40px;top:868.38px;font-size:15px;color:#98a7b5;transform:scaleX(1.0307);">8206435804</span>
<span class="t" style="left:265.70px;top:868.38px;font-size:15px;color:#98a7b5;transform:scaleX(0.9802);">4:37:43 PM</span>
<svg class="a" style="left:485.75px;top:868.90px" width="19.6" height="19.6" viewBox="0 0 20 20"><circle cx="10" cy="10" r="10" fill="#8911e0"/><path d="M13.8 7A4.5 4.5 0 1 0 13.8 13.5" fill="none" stroke="#fff" stroke-width="2.1" stroke-linecap="round"/><path d="M10.2 3.7V6M10.2 14.5V16.8" stroke="#fff" stroke-width="2" stroke-linecap="round"/></svg>
<span class="t b" style="left:510.00px;top:868.38px;font-size:15px;color:#fff;transform:scaleX(1.1822);">$0.0000<i>1</i><span style="color:#888a8f">000</span></span>
<span class="t" style="left:775.10px;top:868.38px;font-size:15px;color:#98a7b5;transform:scaleX(1.0574);">0.00<b class="x">×</b></span>
<svg class="a" style="left:1015.00px;top:868.80px" width="19.8" height="19.8" viewBox="0 0 20 20"><circle cx="10" cy="10" r="10" fill="#8911e0"/><path d="M13.8 7A4.5 4.5 0 1 0 13.8 13.5" fill="none" stroke="#fff" stroke-width="2.1" stroke-linecap="round"/><path d="M10.2 3.7V6M10.2 14.5V16.8" stroke="#fff" stroke-width="2" stroke-linecap="round"/></svg>
<span class="t b" style="left:1039.70px;top:868.38px;font-size:15px;color:#ee6a00;transform:scaleX(1.0547);">$</span>
<span class="t b" style="left:1059.20px;top:868.38px;font-size:15px;color:#ee6a00;transform:scaleX(1.1728);">0.0000<i>1</i><span style="color:#86441a">000</span></span>
<span class="t" style="left:-0.40px;top:921.68px;font-size:15px;color:#98a7b5;transform:scaleX(1.0211);">8206435803</span>
<span class="t" style="left:265.70px;top:921.68px;font-size:15px;color:#98a7b5;transform:scaleX(0.9802);">4:37:42 PM</span>
<svg class="a" style="left:485.75px;top:922.20px" width="19.6" height="19.6" viewBox="0 0 20 20"><circle cx="10" cy="10" r="10" fill="#8911e0"/><path d="M13.8 7A4.5 4.5 0 1 0 13.8 13.5" fill="none" stroke="#fff" stroke-width="2.1" stroke-linecap="round"/><path d="M10.2 3.7V6M10.2 14.5V16.8" stroke="#fff" stroke-width="2" stroke-linecap="round"/></svg>
<span class="t b" style="left:510.00px;top:921.68px;font-size:15px;color:#fff;transform:scaleX(1.1822);">$0.0000<i>1</i><span style="color:#888a8f">000</span></span>
<span class="t" style="left:775.10px;top:921.68px;font-size:15px;color:#98a7b5;transform:scaleX(1.0574);">0.00<b class="x">×</b></span>
<svg class="a" style="left:1015.00px;top:922.10px" width="19.8" height="19.8" viewBox="0 0 20 20"><circle cx="10" cy="10" r="10" fill="#8911e0"/><path d="M13.8 7A4.5 4.5 0 1 0 13.8 13.5" fill="none" stroke="#fff" stroke-width="2.1" stroke-linecap="round"/><path d="M10.2 3.7V6M10.2 14.5V16.8" stroke="#fff" stroke-width="2" stroke-linecap="round"/></svg>
<span class="t b" style="left:1039.70px;top:921.68px;font-size:15px;color:#ee6a00;transform:scaleX(1.0547);">$</span>
<span class="t b" style="left:1059.20px;top:921.68px;font-size:15px;color:#ee6a00;transform:scaleX(1.1728);">0.0000<i>1</i><span style="color:#86441a">000</span></span>
<span class="t" style="left:-0.40px;top:974.98px;font-size:15px;color:#98a7b5;transform:scaleX(1.0187);">8206435802</span>
<span class="t" style="left:265.70px;top:974.98px;font-size:15px;color:#98a7b5;transform:scaleX(0.9802);">4:37:42 PM</span>
<svg class="a" style="left:485.75px;top:975.50px" width="19.6" height="19.6" viewBox="0 0 20 20"><circle cx="10" cy="10" r="10" fill="#8911e0"/><path d="M13.8 7A4.5 4.5 0 1 0 13.8 13.5" fill="none" stroke="#fff" stroke-width="2.1" stroke-linecap="round"/><path d="M10.2 3.7V6M10.2 14.5V16.8" stroke="#fff" stroke-width="2" stroke-linecap="round"/></svg>
<span class="t b" style="left:510.00px;top:974.98px;font-size:15px;color:#fff;transform:scaleX(1.1822);">$0.0000<i>1</i><span style="color:#888a8f">000</span></span>
<span class="t" style="left:775.10px;top:974.98px;font-size:15px;color:#98a7b5;transform:scaleX(1.0574);">0.00<b class="x">×</b></span>
<svg class="a" style="left:1015.00px;top:975.40px" width="19.8" height="19.8" viewBox="0 0 20 20"><circle cx="10" cy="10" r="10" fill="#8911e0"/><path d="M13.8 7A4.5 4.5 0 1 0 13.8 13.5" fill="none" stroke="#fff" stroke-width="2.1" stroke-linecap="round"/><path d="M10.2 3.7V6M10.2 14.5V16.8" stroke="#fff" stroke-width="2" stroke-linecap="round"/></svg>
<span class="t b" style="left:1039.70px;top:974.98px;font-size:15px;color:#ee6a00;transform:scaleX(1.0547);">$</span>
<span class="t b" style="left:1059.20px;top:974.98px;font-size:15px;color:#ee6a00;transform:scaleX(1.1728);">0.0000<i>1</i><span style="color:#86441a">000</span></span>
</body></html>
